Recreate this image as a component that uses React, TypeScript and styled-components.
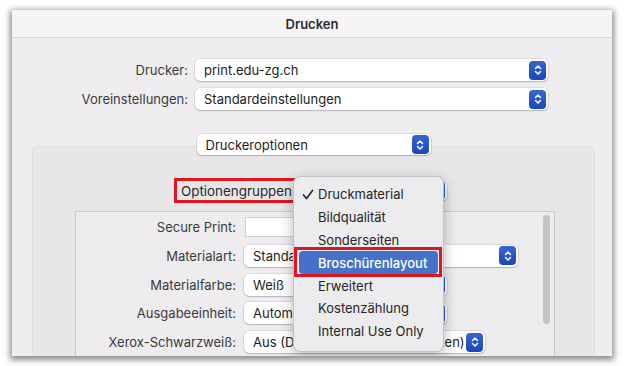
import styled, { createGlobalStyle } from "styled-components";

const GlobalStyle = createGlobalStyle`
  html, body {
    margin: 0;
    background: #ffffff;
  }
  body {
    font-family: Inter, "Noto Sans", "Liberation Sans", sans-serif;
    font-size: 13px;
    color: #1f1f1f;
    -webkit-font-smoothing: antialiased;
  }
`;

const Page = styled.div`
  box-sizing: border-box;
  height: 366px;
  padding: 10px 13px 0 12px;
  overflow: hidden;
`;

const Window = styled.div`
  position: relative;
  height: 346px;
  display: flex;
  flex-direction: column;
  background: #efedf0;
  box-shadow: 0 2px 6px 2px rgba(0, 0, 0, 0.45);
  overflow: hidden;
`;

const TitleBar = styled.div`
  height: 27px;
  display: flex;
  align-items: center;
  justify-content: center;
  background: #f6f4f7;
  border-bottom: 1px solid #d8d6d9;
  font-weight: 600;
  color: #2b2b2b;
`;

const Body = styled.div`
  flex: 1;
  display: flex;
  flex-direction: column;
  padding-top: 21px;
  min-height: 0;
`;

const Fields = styled.div`
  display: flex;
  flex-direction: column;
  gap: 7px;
`;

const FieldRow = styled.div`
  display: flex;
  align-items: center;
  gap: 7px;
`;

const Label = styled.span<{ $width: number }>`
  width: ${({ $width }) => $width}px;
  text-align: right;
  color: #3a3a3a;
  white-space: nowrap;
`;

const Select = styled.div<{ $width: number; $height?: number }>`
  box-sizing: border-box;
  width: ${({ $width }) => $width}px;
  height: ${({ $height }) => $height ?? 22}px;
  display: flex;
  align-items: center;
  justify-content: space-between;
  padding: 0 2px 0 9px;
  background: #ffffff;
  border-radius: 5px;
  box-shadow: 0 0 0 0.5px rgba(0, 0, 0, 0.14), 0 1px 1.5px rgba(0, 0, 0, 0.18);
  color: #1d1d1d;
  white-space: nowrap;
  overflow: hidden;
  flex-shrink: 0;
`;

const Stepper = styled.span`
  width: 17px;
  height: 19px;
  flex-shrink: 0;
  display: flex;
  align-items: center;
  justify-content: center;
  border-radius: 4px;
  background: linear-gradient(#3566d6, #1c47b9);
`;

const Panel = styled.div`
  flex: 1;
  min-height: 0;
  margin: 36px 17px 0 20px;
  display: flex;
  flex-direction: column;
  align-items: center;
  background: #e8e6e9;
  border: 1px solid #e0dee1;
  border-bottom: none;
  border-radius: 6px 6px 0 0;
`;

const TabPopup = styled(Select)`
  margin-top: -13px;
`;

const GroupRow = styled.div`
  align-self: flex-start;
  margin: 23px 0 0 141px;
  display: flex;
  align-items: center;
`;

const Marked = styled.span`
  box-sizing: border-box;
  width: 124px;
  height: 25px;
  flex-shrink: 0;
  padding: 0 0 0 4px;
  display: flex;
  align-items: center;
  border: 3px solid #e3141d;
  color: #2a2a2a;
  font-size: 13.4px;
  white-space: nowrap;
  overflow: hidden;
`;

const ListBox = styled.div`
  align-self: stretch;
  flex: 1;
  min-height: 0;
  margin: 8px 39px 0 42px;
  display: flex;
  background: #eeecef;
  border: 1px solid #c9c7ca;
  border-bottom: none;
  overflow: hidden;
`;

const ListRows = styled.div`
  flex: 1;
  display: flex;
  flex-direction: column;
  gap: 6.75px;
  padding-top: 4px;
`;

const ListRow = styled.div`
  height: 22px;
  display: flex;
  align-items: center;
  gap: 8px;
`;

const TextField = styled.div`
  box-sizing: border-box;
  width: 160px;
  height: 20px;
  margin-left: 1px;
  background: #ffffff;
  border: 1px solid #cfcdd0;
`;

const ScrollTrack = styled.div`
  width: 7px;
  padding: 3px 4px 0 0;
`;

const ScrollThumb = styled.div`
  height: 109px;
  border-radius: 4px;
  background: #c4c2c5;
`;

const Menu = styled.div`
  position: absolute;
  left: 281px;
  top: 166px;
  width: 151px;
  height: 176px;
  box-sizing: border-box;
  padding: 6px 5px 5px;
  background: #ecebee;
  border: 0.5px solid rgba(0, 0, 0, 0.18);
  border-radius: 7px;
  box-shadow: 0 4px 14px rgba(0, 0, 0, 0.28);
  z-index: 2;
`;

const MenuItem = styled.div<{ $active?: boolean }>`
  position: relative;
  height: 22.8px;
  display: flex;
  align-items: center;
  padding-left: 19px;
  border-radius: 4px;
  color: ${({ $active }) => ($active ? "#ffffff" : "#262626")};
  background: ${({ $active }) => ($active ? "#4671c8" : "transparent")};
  font-weight: ${({ $active }) => ($active ? 500 : 400)};
  white-space: nowrap;
`;

const Check = styled.svg`
  position: absolute;
  left: 3px;
  top: 6px;
`;

const Highlight = styled.span`
  position: absolute;
  left: -5px;
  right: -4px;
  top: -4px;
  bottom: -3px;
  border: 3px solid #e3141d;
`;

function Chevrons() {
  return (
    <Stepper>
      <svg width="8" height="12" viewBox="0 0 8 12" fill="none">
        <path d="M1.5 4.5 L4 2 L6.5 4.5" stroke="#fff" strokeWidth="1.5" strokeLinecap="round" strokeLinejoin="round" />
        <path d="M1.5 7.5 L4 10 L6.5 7.5" stroke="#fff" strokeWidth="1.5" strokeLinecap="round" strokeLinejoin="round" />
      </svg>
    </Stepper>
  );
}

const groups = [
  "Druckmaterial",
  "Bildqualität",
  "Sonderseiten",
  "Broschürenlayout",
  "Erweitert",
  "Kostenzählung",
  "Internal Use Only",
];

const options = [
  { label: "Materialart:", value: "Standardeinstellung", width: 274 },
  { label: "Materialfarbe:", value: "Weiß", width: 203 },
  { label: "Ausgabeeinheit:", value: "Automatisch", width: 203 },
  { label: "Xerox-Schwarzweiß:", value: "Aus (Druckerstandard verwenden)", width: 241 },
];

export default function App() {
  return (
    <Page>
      <GlobalStyle />
      <Window>
        <TitleBar>Drucken</TitleBar>
        <Body>
          <Fields>
            <FieldRow>
              <Label $width={176}>Drucker:</Label>
              <Select $width={353}>
                print.edu-zg.ch
                <Chevrons />
              </Select>
            </FieldRow>
            <FieldRow>
              <Label $width={176}>Voreinstellungen:</Label>
              <Select $width={353}>
                Standardeinstellungen
                <Chevrons />
              </Select>
            </FieldRow>
          </Fields>

          <Panel>
            <TabPopup $width={234} $height={21}>
              Druckeroptionen
              <Chevrons />
            </TabPopup>

            <GroupRow>
              <Marked>Optionengruppen</Marked>
              <Select $width={149} $height={20}>
                Druckmaterial
                <Chevrons />
              </Select>
            </GroupRow>

            <ListBox>
              <ListRows>
                <ListRow>
                  <Label $width={160}>Secure Print:</Label>
                  <TextField />
                </ListRow>
                {options.map(o => (
                  <ListRow key={o.label}>
                    <Label $width={160}>{o.label}</Label>
                    <Select $width={o.width}>
                      {o.value}
                      <Chevrons />
                    </Select>
                  </ListRow>
                ))}
              </ListRows>
              <ScrollTrack>
                <ScrollThumb />
              </ScrollTrack>
            </ListBox>
          </Panel>
        </Body>

        <Menu>
          {groups.map((g, i) => (
            <MenuItem key={g} $active={i === 3}>
              {i === 0 && (
                <Check width="12" height="11" viewBox="0 0 12 11" fill="none">
                  <path d="M1.5 6 L4.5 9.5 L10.5 1.5" stroke="#262626" strokeWidth="1.7" strokeLinecap="round" strokeLinejoin="round" />
                </Check>
              )}
              {g}
              {i === 3 && <Highlight />}
            </MenuItem>
          ))}
        </Menu>
      </Window>
    </Page>
  );
}
